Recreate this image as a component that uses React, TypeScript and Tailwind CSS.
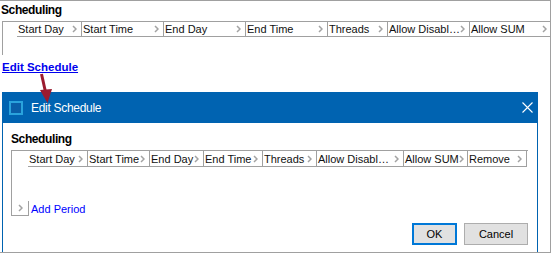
import React from "react";

type Col = { label: string; w: string };

const outerCols: Col[] = [
  { label: "Start Day", w: "w-[64px]" },
  { label: "Start Time", w: "w-[82px]" },
  { label: "End Day", w: "w-[82px]" },
  { label: "End Time", w: "w-[82px]" },
  { label: "Threads", w: "w-[60px]" },
  { label: "Allow Disabl…", w: "w-[82px]" },
  { label: "Allow SUM", w: "w-[82px]" },
];

const dialogCols: Col[] = [
  { label: "Start Day", w: "w-[59px]" },
  { label: "Start Time", w: "w-[62px]" },
  { label: "End Day", w: "w-[54px]" },
  { label: "End Time", w: "w-[59px]" },
  { label: "Threads", w: "w-[54px]" },
  { label: "Allow Disabl…", w: "w-[87px]" },
  { label: "Allow SUM", w: "w-[64px]" },
  { label: "Remove", w: "w-[60px]" },
];

function Chevron() {
  return (
    <svg width="5" height="8" viewBox="0 0 5 8" className="shrink-0">
      <path d="M1 1 L4 4 L1 7" fill="none" stroke="#a3a3a3" strokeWidth="1.5" />
    </svg>
  );
}

function HeaderRow({ cols, h, lastBorder }: { cols: Col[]; h: string; lastBorder?: boolean }) {
  return (
    <div className="flex">
      {cols.map((c, i) => (
        <div
          key={c.label}
          className={`${c.w} ${h} shrink-0 flex items-center justify-between border-b border-[#a0a0a0] pl-[1px] pr-[4px] text-[11px] leading-[14px] text-[#111] whitespace-nowrap ${
            i > 0 ? "border-l" : ""
          } ${lastBorder && i === cols.length - 1 ? "border-r" : ""}`}
        >
          <span>{c.label}</span>
          <Chevron />
        </div>
      ))}
    </div>
  );
}

export default function App() {
  return (
    <div
      className="relative w-[551px] h-[253px] flex flex-col bg-white border-t border-r border-b border-[#a0a0a0] overflow-hidden"
      style={{ fontFamily: '"Liberation Sans", Arial, sans-serif' }}
    >
      <div className="pt-[1px] pl-[1px] text-[12px] leading-[16px] font-bold tracking-[-0.4px] text-black">
        Scheduling
      </div>

      <div className="mt-[3px] ml-[2px] h-[34px] shrink-0 border-l border-t border-[#a0a0a0] overflow-hidden">
        <div className="flex">
          <div className="w-[14px] shrink-0" />
          <HeaderRow cols={outerCols} h="h-[15px]" />
        </div>
      </div>

      <div className="mt-[5px] pl-[2px] text-[11.5px] leading-[14px]">
        <a href="#" className="font-bold text-[#0000ee] underline">
          Edit Schedule
        </a>
      </div>

      <div className="mt-[18px] ml-[2px] w-[536px] flex-1 flex flex-col border-l border-r border-[#0063b1]">
        <div className="h-[31px] shrink-0 bg-[#0063b1] flex items-center pl-[7px] pr-[5px] -ml-px -mr-px">
          <div className="w-[14px] h-[14px] border-2 border-[#2aa3dc] bg-[#0a5ea8]" />
          <span className="ml-[8px] text-[12px] tracking-[-0.3px] text-white">Edit Schedule</span>
          <div className="flex-1" />
          <svg width="11" height="11" viewBox="0 0 11 11">
            <path d="M0.5 0.5 L10.5 10.5 M10.5 0.5 L0.5 10.5" stroke="#fff" strokeWidth="1.1" />
          </svg>
        </div>

        <div className="flex-1 flex flex-col pl-[8px] pr-[9px]">
          <div className="pt-[8px] text-[12px] leading-[16px] font-bold tracking-[-0.4px] text-black">
            Scheduling
          </div>

          <div className="mt-[3px] w-[517px] h-[66px] flex flex-col border-l border-t border-[#a0a0a0]">
            <div className="flex">
              <div className="w-[16px] shrink-0" />
              <HeaderRow cols={dialogCols} h="h-[16px]" lastBorder />
            </div>
            <div className="h-[34px]" />
            <div className="flex h-[15px] items-center">
              <div className="w-[17px] h-[15px] shrink-0 flex items-center justify-center border-r border-b border-[#a0a0a0]">
                <Chevron />
              </div>
              <span className="ml-[2px] text-[11px] leading-[14px] text-[#0000ff]">Add Period</span>
            </div>
          </div>

          <div className="mt-[7px] flex justify-end gap-[7px]">
            <button className="w-[45px] h-[22px] bg-[#e1e1e1] border-2 border-[#0078d7] text-[11px] text-black">
              OK
            </button>
            <button className="w-[64px] h-[22px] bg-[#e1e1e1] border border-[#adadad] text-[11px] text-black">
              Cancel
            </button>
          </div>
        </div>
      </div>

      <svg
        className="absolute left-[35px] top-[72px]"
        width="20"
        height="32"
        viewBox="0 0 20 32"
      >
        <path d="M6.5 1 L10.5 19" stroke="#9b1b2f" strokeWidth="3" />
        <path d="M5 17 L17 16 L12.5 30 Z" fill="#9b1b2f" />
      </svg>
    </div>
  );
}
